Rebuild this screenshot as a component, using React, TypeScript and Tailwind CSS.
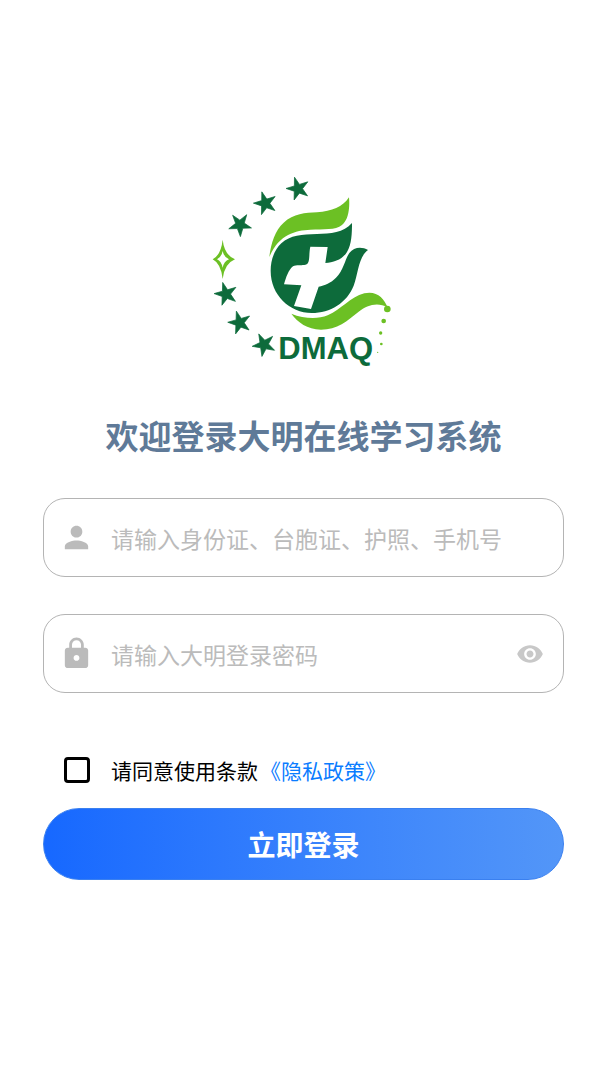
import { useState } from "react";
import { MdLock, MdPerson, MdVisibility } from "react-icons/md";

const stars = [
  { x: 293, y: 71, angle: -17 },
  { x: 195, y: 115, angle: -17 },
  { x: 119, y: 179, angle: 34 },
  { x: 77, y: 387, angle: -16 },
  { x: 118, y: 473, angle: -16 },
  { x: 191, y: 539, angle: -26 },
];

const dots = [
  { x: 561, y: 432, r: 10 },
  { x: 550, y: 468, r: 7 },
  { x: 541, y: 504, r: 5 },
  { x: 543, y: 537, r: 4 },
  { x: 532, y: 562, r: 2 },
];

function Logo() {
  return (
    <svg viewBox="-7 0 636 630" className="h-[210px] w-[212px]" role="img" aria-label="DMAQ">
      {/* Ring of stars */}
      {stars.map((star, index) => (
        <path
          key={index}
          d="M0 -36L8 -11L34 -11L13 4L21 29L0 14L-21 29L-13 4L-34 -11L-8 -11Z"
          transform={`translate(${star.x} ${star.y}) rotate(${star.angle})`}
          fill="#0d6b3b"
          stroke="#0d6b3b"
          strokeWidth="2"
          strokeLinejoin="round"
        />
      ))}
      <path
        d="M67 224Q72 270 104 283Q72 296 67 342Q62 296 37 283Q62 270 67 224ZM67 258Q63 277 50 283Q63 289 67 308Q71 289 86 283Q71 277 67 258Z"
        fill="#6cc024"
        fillRule="evenodd"
      />

      {/* Leaves and cross */}
      <path
        d="M207 276C211 238 224 196 250 173C280 146 315 143 350 142C395 139 427 126 446 97C449 130 444 164 425 180C405 196 370 192 330 194C285 196 236 208 207 276Z"
        fill="#6cc024"
      />
      <path
        d="M455 174C430 203 390 206 350 207C305 208 270 210 243 235C220 257 211 287 211 318C211 390 268 444 334 444C390 444 440 413 460 362C474 325 474 276 503 255C485 244 461 245 447 264C434 282 430 316 407 338C392 354 373 361 355 365L332 432L281 423L303 361L251 358C257 338 264 315 278 304C290 297 307 304 319 298C330 292 325 265 330 245L382 246L375 294C400 292 426 284 440 261C454 238 455 205 455 174Z"
        fill="#0d6b3b"
      />
      <path
        d="M273 446C310 461 351 464 382 451C425 433 448 396 492 385C530 377 550 399 562 427C530 410 500 421 475 440C442 467 410 494 362 494C320 492 293 473 273 446Z"
        fill="#6cc024"
      />
      {dots.map((dot, index) => (
        <circle key={index} cx={dot.x} cy={dot.y} r={dot.r} fill="#6cc024" />
      ))}

      <text x="234" y="583" fontSize="93" className="fill-[#0d6b3b] font-['Liberation_Sans',sans-serif] font-bold">
        DMAQ
      </text>
    </svg>
  );
}

export default function App() {
  const [showPassword, setShowPassword] = useState(false);

  return (
    <div className="min-h-screen bg-white px-[43px] pt-[165px] pb-16 font-['Noto_Sans_CJK_SC',sans-serif]">
      {/* Header */}
      <header className="flex flex-col items-center">
        <Logo />
        <h1 className="mt-[35px] text-[33px] leading-[50px] font-bold text-[#5f7a98]">欢迎登录大明在线学习系统</h1>
      </header>

      {/* Login Form */}
      <form className="mt-[38px]" onSubmit={(e) => e.preventDefault()}>
        <div className="flex h-[79px] items-center rounded-[22px] border border-[#b4b4b4] px-[15px]">
          <MdPerson className="size-[35px] shrink-0 text-[#bbbbbb]" />
          <input
            type="text"
            aria-label="账号"
            placeholder="请输入身份证、台胞证、护照、手机号"
            className="ml-[17px] h-full min-w-0 flex-1 text-[23px] outline-none placeholder:text-[#bbbbbb]"
          />
        </div>

        <div className="mt-[37px] flex h-[79px] items-center rounded-[22px] border border-[#b4b4b4] px-[15px]">
          <MdLock className="size-[35px] shrink-0 text-[#bbbbbb]" />
          <input
            type={showPassword ? "text" : "password"}
            aria-label="密码"
            placeholder="请输入大明登录密码"
            className="ml-[17px] h-full min-w-0 flex-1 text-[23px] outline-none placeholder:text-[#bbbbbb]"
          />
          <button type="button" aria-label="显示密码" onClick={() => setShowPassword(!showPassword)} className="mr-1">
            <MdVisibility className="size-7 text-[#c8c8c8]" />
          </button>
        </div>

        {/* Terms */}
        <div className="mt-[61px] flex items-center pl-[21px] text-[21px] leading-8">
          <input
            id="agree"
            type="checkbox"
            className="mr-[21px] size-[26px] shrink-0 appearance-none rounded-[4px] border-3 border-black checked:bg-[#1668ff]"
          />
          <label htmlFor="agree" className="text-black">请同意使用条款</label>
          <a href="#privacy" className="ml-0.5 text-[#0a7cff]">《隐私政策》</a>
        </div>

        <button
          type="submit"
          className="mt-[22px] h-[72px] w-full rounded-full border border-[#3a80f0] bg-linear-to-r from-[#1668ff] to-[#5396f8] text-[28px] font-bold text-white"
        >
          立即登录
        </button>
      </form>
    </div>
  );
}
